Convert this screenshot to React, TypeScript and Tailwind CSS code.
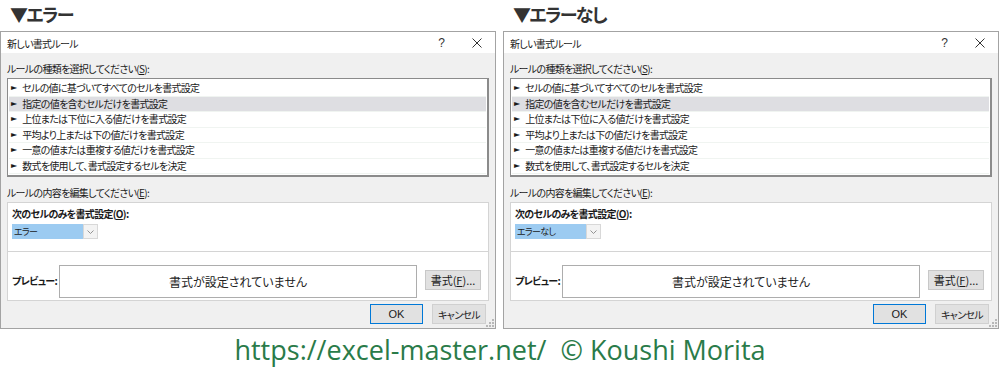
const jp = "font-['Noto_Sans_CJK_JP','Noto_Sans',sans-serif] [font-feature-settings:'palt']";

const ruleTypes = [
  "セルの値に基づいてすべてのセルを書式設定",
  "指定の値を含むセルだけを書式設定",
  "上位または下位に入る値だけを書式設定",
  "平均より上または下の値だけを書式設定",
  "一意の値または重複する値だけを書式設定",
  "数式を使用して、書式設定するセルを決定",
];

const Grip = () => (
  <svg width="8" height="8" viewBox="0 0 8 8" className="absolute right-[1px] bottom-[1px]">
    {[
      [6, 0],
      [6, 3],
      [3, 3],
      [6, 6],
      [3, 6],
      [0, 6],
    ].map(([x, y]) => (
      <rect key={`${x}-${y}`} x={x} y={y} width="2" height="2" fill="#b8b8b8" />
    ))}
  </svg>
);

const RuleDialog = ({ heading, value }: { heading: string; value: string }) => (
  <div className="w-[496px] shrink-0">
    <div className={`h-[31px] pl-[10px] pt-[1px] text-[18px] font-bold leading-[26px] tracking-[-1.6px] text-[#333] ${jp}`}>
      {heading}
    </div>
    <div className={`relative h-[298px] border border-[#a3a3a3] bg-[#f0f0f0] text-[10px] tracking-[-0.7px] text-[#1a1a1a] ${jp}`}>
      {/* title bar */}
      <div className="flex h-[21px] items-center bg-white pl-[6px] pr-[13px]">
        <span className="flex-1 pt-[1px]">新しい書式ルール</span>
        <span className="text-[12px] tracking-normal text-[#333] font-['Liberation_Sans',sans-serif]">?</span>
        <svg width="10" height="10" viewBox="0 0 10 10" className="ml-[27px]">
          <path d="M0.5 0.5 L9.5 9.5 M9.5 0.5 L0.5 9.5" stroke="#333" strokeWidth="1" />
        </svg>
      </div>

      <div className="px-[6px]">
        <div className="pt-[9px] leading-[14px]">
          ルールの種類を選択してください(<span className="underline">S</span>):
        </div>
        <div className="mt-[2px] h-[99px] border border-[#8b8b8b] border-r-2 border-b-2 bg-white pt-[2px]">
          {ruleTypes.map((t, i) => (
            <div
              key={t}
              className={`mx-[1px] flex h-[15.5px] items-center border-b border-[#f0f4f1] pl-[2px] leading-none ${
                i === 1 ? "bg-[#dedee2]" : ""
              }`}
            >
              <span className="mr-[5px] font-['DejaVu_Sans',sans-serif] text-[8px] tracking-normal">►</span>
              {t}
            </div>
          ))}
        </div>

        <div className="pt-[9px] leading-[14px]">
          ルールの内容を編集してください(<span className="underline">E</span>):
        </div>
        <div className="mt-[2px] border border-[#d4d4d4] bg-white">
          <div className="h-[49px] border-b border-[#d4d4d4] pl-[4px] pt-[4px]">
            <div className="font-bold leading-[14px]">
              次のセルのみを書式設定(<span className="underline">O</span>):
            </div>
            <div className="mt-[3px] flex h-[15px]">
              <div className="flex w-[71px] items-center bg-[#9ccbf1] pl-[2px] text-[9px] leading-none">{value}</div>
              <div className="flex w-[15px] items-center justify-center border border-[#d8d8d8] bg-[#f3f3f3]">
                <svg width="7" height="4" viewBox="0 0 7 4">
                  <path d="M0.5 0.5 L3.5 3.5 L6.5 0.5" stroke="#888" fill="none" strokeWidth="0.9" />
                </svg>
              </div>
            </div>
          </div>
          <div className="flex h-[48px] items-start pl-[4px] pt-[13px]">
            <div className="w-[47px] whitespace-nowrap pt-[9px] font-bold leading-[14px]">プレビュー:</div>
            <div className="flex h-[33px] w-[358px] items-center justify-center border border-[#adadad] text-[12px] tracking-normal text-[#222]">
              書式が設定されていません
            </div>
            <div className="ml-[8px] mt-[5px] flex h-[20px] w-[56px] items-center justify-center border border-[#c8c8c8] bg-[#e1e1e1] text-[11px] tracking-normal">
              書式(<span className="underline">F</span>)...
            </div>
          </div>
        </div>

        <div className="mt-[3px] flex justify-end gap-[9px] pr-[3px]">
          <div className="flex h-[20px] w-[53px] items-center justify-center border border-[#0078d7] bg-[#e1e1e1] font-['Liberation_Sans',sans-serif] text-[11px] tracking-normal">
            OK
          </div>
          <div className="flex h-[20px] w-[54px] items-center justify-center border border-[#d0d0d0] bg-[#e1e1e1] text-[10px]">
            キャンセル
          </div>
        </div>
      </div>
      <Grip />
    </div>
  </div>
);

export default function App() {
  return (
    <div className="h-[372px] w-[1000px] overflow-hidden bg-white">
      <div className="flex gap-[7px]">
        <RuleDialog heading="▼エラー" value="エラー" />
        <RuleDialog heading="▼エラーなし" value="エラーなし" />
      </div>
      <div className="pt-[4px] text-center font-['Open_Sans',sans-serif] text-[27px] leading-[34px] text-[#2a7b49]">
        https://excel-master.net/&nbsp;&nbsp;© Koushi Morita
      </div>
    </div>
  );
}
